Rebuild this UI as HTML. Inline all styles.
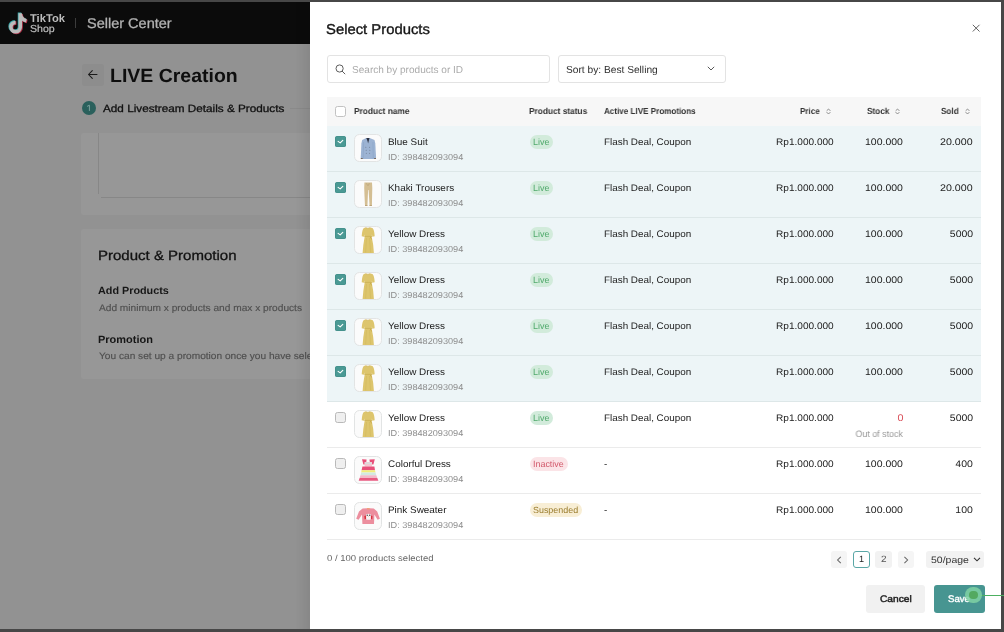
<!DOCTYPE html>
<html><head><meta charset="utf-8">
<style>
*{box-sizing:border-box;margin:0;padding:0}
html,body{width:1004px;height:632px;overflow:hidden;background:#929292;font-family:"Liberation Sans",sans-serif;position:relative}
.abs{position:absolute}
.t{position:absolute;white-space:nowrap;transform-origin:0 0;text-rendering:geometricPrecision;will-change:transform}
.cbon{width:11.1px;height:11.1px;border-radius:2.5px;background:#4a9994;box-shadow:inset 0 0 0 .6px #3f8b86}

.cboff{width:11px;height:11.1px;border-radius:2.5px;border:1px solid #b9b9b9;background:#efefef}
.thumb{width:28px;height:28.3px;border:1px solid #e2e4e4;border-radius:5.5px;background:#fbfbfb;overflow:hidden}
</style></head><body>
<!-- header -->
<div class="abs" style="left:0;top:0;width:1004px;height:44px;background:#0b0b0b"></div>
<svg class="abs" style="left:0.4px;top:0.6px" width="32" height="40" viewBox="0 0 32 40">
  <g fill="none" stroke-width="3.5">
  <path d="M20.3 12.2 V26.1 A4.7 4.7 0 1 1 15.6 21.4 M20.3 13 Q21.3 18.6 26.4 19.8" stroke="#3aa9ab" transform="translate(-0.8,-0.7)"/>
  <path d="M20.3 12.2 V26.1 A4.7 4.7 0 1 1 15.6 21.4 M20.3 13 Q21.3 18.6 26.4 19.8" stroke="#b02c44" transform="translate(0.8,0.7)"/>
  <path d="M20.3 12.2 V26.1 A4.7 4.7 0 1 1 15.6 21.4 M20.3 13 Q21.3 18.6 26.4 19.8" stroke="#bcbcbc"/>
  </g>
</svg>
<div class="t" style="left:29.90px;top:13.90px;font-size:11.17px;line-height:11.17px;font-weight:bold;color:#bdbdbd;transform:scaleX(0.987);">TikTok</div>
<div class="t" style="left:29.64px;top:24.70px;font-size:10.20px;line-height:10.20px;font-weight:normal;color:#bdbdbd;-webkit-text-stroke:0.2px #bdbdbd;transform:scaleX(1.041);">Shop</div>
<div class="abs" style="left:75.2px;top:18px;width:1px;height:10px;background:#3c3c3c"></div>
<div class="t" style="left:87.29px;top:15.80px;font-size:14.11px;line-height:14.11px;font-weight:normal;color:#b2b2b2;-webkit-text-stroke:0.3px #b2b2b2;transform:scaleX(1.028);">Seller Center</div>

<!-- page under overlay -->
<div class="abs" style="left:81.5px;top:63.5px;width:22.3px;height:22px;border-radius:3px;background:#8d8d8d"></div>
<svg class="abs" style="left:87px;top:69px" width="11" height="11" viewBox="0 0 11 11"><path d="M10 5.5 H1.6 M5.3 1.6 L1.5 5.5 L5.3 9.4" fill="none" stroke="#1a1a1a" stroke-width="1.05" stroke-linecap="round" stroke-linejoin="round"/></svg>
<div class="t" style="left:109.63px;top:66.80px;font-size:19.13px;line-height:19.13px;font-weight:bold;color:#0e0e0e;transform:scaleX(1.019);">LIVE Creation</div>
<div class="abs" style="left:82px;top:101px;width:14px;height:14px;border-radius:50%;background:#2a605c"></div>
<svg class="abs" style="left:82px;top:101px" width="14" height="14" viewBox="0 0 14 14"><path d="M5.1 5.4 L7.4 4.2 V9.9" fill="none" stroke="#84a9a4" stroke-width=".9" stroke-linejoin="round"/></svg>
<div class="t" style="left:102.90px;top:104.95px;font-size:10.47px;line-height:10.47px;font-weight:normal;color:#111;-webkit-text-stroke:0.3px #111;transform:scaleX(1.121);">Add Livestream Details &amp; Products</div>
<div class="abs" style="left:290px;top:107.7px;width:22px;height:1px;background:#8a8a8a"></div>
<div class="abs" style="left:81.3px;top:133px;width:240px;height:81.7px;border-radius:2px;background:#979797"></div>
<div class="abs" style="left:98px;top:133px;width:1px;height:61px;background:#878787"></div>
<div class="abs" style="left:100.5px;top:196.8px;width:220px;height:1px;background:#878787"></div>
<div class="abs" style="left:81px;top:228.6px;width:240px;height:150px;border-radius:2px;background:#979797"></div>
<div class="t" style="left:97.59px;top:249.20px;font-size:13.55px;line-height:13.55px;font-weight:normal;color:#121212;-webkit-text-stroke:0.3px #121212;transform:scaleX(1.108);">Product &amp; Promotion</div>
<div class="t" style="left:98.44px;top:286.80px;font-size:10.47px;line-height:10.47px;font-weight:bold;color:#161616;transform:scaleX(1.032);">Add Products</div>
<div class="t" style="left:98.70px;top:303.50px;font-size:9.50px;line-height:9.50px;font-weight:normal;color:#4f4f4f;-webkit-text-stroke:0.15px #4f4f4f;transform:scaleX(1.068);">Add minimum x products and max x products</div>
<div class="t" style="left:98.02px;top:335.05px;font-size:10.61px;line-height:10.61px;font-weight:bold;color:#161616;transform:scaleX(1.034);">Promotion</div>
<div class="t" style="left:98.53px;top:352.10px;font-size:9.50px;line-height:9.50px;font-weight:normal;color:#4f4f4f;-webkit-text-stroke:0.15px #4f4f4f;transform:scaleX(1.068);">You can set up a promotion once you have selected products</div>

<!-- modal -->
<div class="abs" style="left:296px;top:0;width:14px;height:632px;background:linear-gradient(to right,rgba(0,0,0,0),rgba(0,0,0,.07))"></div>
<div class="abs" style="left:310px;top:0;width:694px;height:632px;background:#fff"></div>
<div class="t" style="left:326.48px;top:22.70px;font-size:14.25px;line-height:14.25px;font-weight:normal;color:#161616;-webkit-text-stroke:0.35px #161616;transform:scaleX(1.041);">Select Products</div>
<svg class="abs" style="left:972.2px;top:23.9px" width="8.5" height="8.5" viewBox="0 0 8.5 8.5"><path d="M.8 .8 L7.5 7.5 M7.5 .8 L.8 7.5" stroke="#5a5a5a" stroke-width=".95"/></svg>
<div class="abs" style="left:327.2px;top:55.2px;width:222.6px;height:27.5px;border:1px solid #e3e3e3;border-radius:3px"></div>
<svg class="abs" style="left:335.4px;top:63.6px" width="11" height="11" viewBox="0 0 11 11"><circle cx="4.6" cy="4.5" r="3.6" fill="none" stroke="#555" stroke-width=".95"/><path d="M7.2 7.2 L9.9 9.9" stroke="#555" stroke-width=".95" stroke-linecap="round"/></svg>
<div class="t" style="left:351.60px;top:65.95px;font-size:10.06px;line-height:10.06px;font-weight:normal;color:#ababab;transform:scaleX(0.997);">Search by products or ID</div>
<div class="abs" style="left:558px;top:55.3px;width:167.8px;height:27.5px;border:1px solid #e3e3e3;border-radius:3px"></div>
<div class="t" style="left:566.30px;top:65.50px;font-size:10.20px;line-height:10.20px;font-weight:normal;color:#2e2e2e;transform:scaleX(0.998);">Sort by: Best Selling</div>
<svg class="abs" style="left:707.2px;top:66.2px" width="8" height="5" viewBox="0 0 8 5"><path d="M.8 .8 L4 4 L7.2 .8" fill="none" stroke="#505050" stroke-width=".95"/></svg>

<div class="abs" style="left:326.5px;top:96.5px;width:654.8px;height:29.5px;background:#f7f7f7"></div>
<div class="abs cboff" style="left:335.1px;top:106px;width:10.9px;height:10.8px;background:#fff;border-color:#c2c2c2"></div>
<div class="t" style="left:354.23px;top:107.10px;font-size:8.80px;line-height:8.80px;font-weight:bold;color:#333;transform:scaleX(0.945);">Product name</div>
<div class="t" style="left:529.13px;top:107.10px;font-size:8.80px;line-height:8.80px;font-weight:bold;color:#333;transform:scaleX(0.944);">Product status</div>
<div class="t" style="left:604.47px;top:107.10px;font-size:8.80px;line-height:8.80px;font-weight:bold;color:#333;transform:scaleX(0.919);">Active LIVE Promotions</div>
<div class="t" style="left:799.54px;top:107.10px;font-size:8.80px;line-height:8.80px;font-weight:bold;color:#333;transform:scaleX(0.916);">Price</div>
<div class="t" style="left:866.67px;top:107.10px;font-size:8.80px;line-height:8.80px;font-weight:bold;color:#333;transform:scaleX(0.936);">Stock</div>
<div class="t" style="left:941.27px;top:107.10px;font-size:8.80px;line-height:8.80px;font-weight:bold;color:#333;transform:scaleX(0.926);">Sold</div>
<svg class="abs" style="left:825.5px;top:108.2px" width="5" height="7" viewBox="0 0 5 7"><path d="M.9 2.6 L2.5 1 L4.1 2.6 M.9 4.4 L2.5 6 L4.1 4.4" fill="none" stroke="#7a7a7a" stroke-width=".85" stroke-linecap="round" stroke-linejoin="round"/></svg>
<svg class="abs" style="left:895.1px;top:108.2px" width="5" height="7" viewBox="0 0 5 7"><path d="M.9 2.6 L2.5 1 L4.1 2.6 M.9 4.4 L2.5 6 L4.1 4.4" fill="none" stroke="#7a7a7a" stroke-width=".85" stroke-linecap="round" stroke-linejoin="round"/></svg>
<svg class="abs" style="left:964.9px;top:108.2px" width="5" height="7" viewBox="0 0 5 7"><path d="M.9 2.6 L2.5 1 L4.1 2.6 M.9 4.4 L2.5 6 L4.1 4.4" fill="none" stroke="#7a7a7a" stroke-width=".85" stroke-linecap="round" stroke-linejoin="round"/></svg>

<div class="abs" style="left:326.5px;top:126px;width:654.7px;height:46px;background:#edf5f7"></div>
<div class="abs" style="left:326.5px;top:171px;width:654.7px;height:1px;background:#dde7e8"></div>
<div class="abs cbon" style="left:335px;top:136px"><svg width="11.1" height="11.1" viewBox="0 0 11.1 11.1" style="position:absolute;left:0;top:0"><path d="M3.1 5.4 L5.2 6.9 L7.8 4.3" fill="none" stroke="#fff" stroke-width="1.1" stroke-linecap="round" stroke-linejoin="round"/></svg></div>
<div class="abs thumb" style="left:354.3px;top:134px"><svg width="28" height="28" viewBox="0 0 28 28" style="position:absolute;left:-1px;top:-1px"><path d="M12.2 4.1 L15.7 4.1 L20.5 6 L21.3 9.5 L22.1 24.6 L20 24.9 L19.6 24.9 L8.8 24.9 L6.7 24.6 L7.4 9.5 L8.2 6 Z" fill="#9cb3d3"/><path d="M9.6 8 L9.2 24.6 M18.9 8 L19.3 24.6" stroke="#87a0c4" stroke-width=".5"/><path d="M12.3 4.1 L15.5 4.1 L14.7 7 L14.1 9.6 L13.5 7 Z" fill="#2c3140"/><rect x="6.8" y="24" width="1.9" height=".9" fill="#6e5e50"/><rect x="20.1" y="24" width="1.9" height=".9" fill="#6e5e50"/><g fill="#6f7c92"><circle cx="11.8" cy="13.2" r=".5"/><circle cx="15.6" cy="13.2" r=".5"/><circle cx="12.2" cy="16.3" r=".5"/><circle cx="15.8" cy="16.3" r=".5"/><circle cx="12.3" cy="19.3" r=".5"/><circle cx="15.6" cy="19.3" r=".5"/></g></svg></div>
<div class="t" style="left:387.72px;top:138.00px;font-size:9.50px;line-height:9.50px;font-weight:normal;color:#1c1c1c;transform:scaleX(1.044);">Blue Suit</div>
<div class="t" style="left:387.71px;top:153.20px;font-size:8.66px;line-height:8.66px;font-weight:normal;color:#8c8c8c;transform:scaleX(1.056);">ID: 398482093094</div>
<div class="abs" style="left:529.9px;top:134.5px;width:23.3px;height:14.3px;border-radius:7.2px;background:#d2ebdb"></div>
<div class="t" style="left:533.16px;top:138.00px;font-size:8.94px;line-height:8.94px;font-weight:normal;color:#4fa96b;transform:scaleX(0.990);">Live</div>
<div class="t" style="left:603.72px;top:138.20px;font-size:9.50px;line-height:9.50px;font-weight:normal;color:#222;transform:scaleX(1.038);">Flash Deal, Coupon</div>
<div class="t" style="left:775.80px;top:137.85px;font-size:9.50px;line-height:9.50px;font-weight:normal;color:#222;transform:scaleX(1.061);">Rp1.000.000</div>
<div class="t" style="left:865.17px;top:137.85px;font-size:9.50px;line-height:9.50px;font-weight:normal;color:#222;transform:scaleX(1.104);">100.000</div>
<div class="t" style="left:940.04px;top:137.85px;font-size:9.50px;line-height:9.50px;font-weight:normal;color:#222;transform:scaleX(1.122);">20.000</div>
<div class="abs" style="left:326.5px;top:172px;width:654.7px;height:46px;background:#edf5f7"></div>
<div class="abs" style="left:326.5px;top:217px;width:654.7px;height:1px;background:#dde7e8"></div>
<div class="abs cbon" style="left:335px;top:182px"><svg width="11.1" height="11.1" viewBox="0 0 11.1 11.1" style="position:absolute;left:0;top:0"><path d="M3.1 5.4 L5.2 6.9 L7.8 4.3" fill="none" stroke="#fff" stroke-width="1.1" stroke-linecap="round" stroke-linejoin="round"/></svg></div>
<div class="abs thumb" style="left:354.3px;top:180px"><svg width="28" height="28" viewBox="0 0 28 28" style="position:absolute;left:-1px;top:-1px"><path d="M10.4 2.6 L18 2.6 L18.3 8 L18.1 16 L17.9 25.9 L15.6 25.9 L14.6 10 L14.1 10 L13.4 25.9 L11 25.9 L10.5 16 L10.2 8 Z" fill="#d4be93"/><path d="M12.5 3.2 L13.6 5.6 M15.3 3.2 L14.4 5.6" stroke="#b39d72" stroke-width=".6"/><rect x="11" y="25" width="2.4" height=".9" fill="#b8a076"/><rect x="15.5" y="25" width="2.4" height=".9" fill="#b8a076"/></svg></div>
<div class="t" style="left:387.72px;top:184.00px;font-size:9.50px;line-height:9.50px;font-weight:normal;color:#1c1c1c;transform:scaleX(1.044);">Khaki Trousers</div>
<div class="t" style="left:387.71px;top:199.20px;font-size:8.66px;line-height:8.66px;font-weight:normal;color:#8c8c8c;transform:scaleX(1.056);">ID: 398482093094</div>
<div class="abs" style="left:529.9px;top:180.5px;width:23.3px;height:14.3px;border-radius:7.2px;background:#d2ebdb"></div>
<div class="t" style="left:533.16px;top:184.00px;font-size:8.94px;line-height:8.94px;font-weight:normal;color:#4fa96b;transform:scaleX(0.990);">Live</div>
<div class="t" style="left:603.72px;top:184.20px;font-size:9.50px;line-height:9.50px;font-weight:normal;color:#222;transform:scaleX(1.038);">Flash Deal, Coupon</div>
<div class="t" style="left:775.80px;top:183.85px;font-size:9.50px;line-height:9.50px;font-weight:normal;color:#222;transform:scaleX(1.061);">Rp1.000.000</div>
<div class="t" style="left:865.17px;top:183.85px;font-size:9.50px;line-height:9.50px;font-weight:normal;color:#222;transform:scaleX(1.104);">100.000</div>
<div class="t" style="left:940.04px;top:183.85px;font-size:9.50px;line-height:9.50px;font-weight:normal;color:#222;transform:scaleX(1.122);">20.000</div>
<div class="abs" style="left:326.5px;top:218px;width:654.7px;height:46px;background:#edf5f7"></div>
<div class="abs" style="left:326.5px;top:263px;width:654.7px;height:1px;background:#dde7e8"></div>
<div class="abs cbon" style="left:335px;top:228px"><svg width="11.1" height="11.1" viewBox="0 0 11.1 11.1" style="position:absolute;left:0;top:0"><path d="M3.1 5.4 L5.2 6.9 L7.8 4.3" fill="none" stroke="#fff" stroke-width="1.1" stroke-linecap="round" stroke-linejoin="round"/></svg></div>
<div class="abs thumb" style="left:354.3px;top:226px"><svg width="28" height="28" viewBox="0 0 28 28" style="position:absolute;left:-1px;top:-1px"><path d="M11.6 1.5 Q13.9 3 16.2 1.5 L18.4 2.1 Q20.3 3.5 20.7 10.3 L18.4 10.8 L17.9 8.5 L17.8 11 Q19.4 18 19.9 27 L8.6 27 Q9.2 18 10.6 11 L10.5 8.5 L10 10.8 L7.7 10.3 Q8.1 3.5 9.9 2.1 Z" fill="#ddc56d"/><path d="M12.5 12 L11.6 26.5 M15.5 12 L16.6 26.5" stroke="#cdb257" stroke-width=".4"/><path d="M10.3 10.4 H18.2" stroke="#c9ad52" stroke-width=".7"/><path d="M16.6 10.6 L17.9 13.4 L17.2 13.6 L16.3 11.2 Z" fill="#c4a64a"/><path d="M11.6 1.5 Q13.9 3 16.2 1.5" fill="none" stroke="#c9ad52" stroke-width=".5"/></svg></div>
<div class="t" style="left:387.72px;top:230.00px;font-size:9.50px;line-height:9.50px;font-weight:normal;color:#1c1c1c;transform:scaleX(1.044);">Yellow Dress</div>
<div class="t" style="left:387.71px;top:245.20px;font-size:8.66px;line-height:8.66px;font-weight:normal;color:#8c8c8c;transform:scaleX(1.056);">ID: 398482093094</div>
<div class="abs" style="left:529.9px;top:226.5px;width:23.3px;height:14.3px;border-radius:7.2px;background:#d2ebdb"></div>
<div class="t" style="left:533.16px;top:230.00px;font-size:8.94px;line-height:8.94px;font-weight:normal;color:#4fa96b;transform:scaleX(0.990);">Live</div>
<div class="t" style="left:603.72px;top:230.20px;font-size:9.50px;line-height:9.50px;font-weight:normal;color:#222;transform:scaleX(1.038);">Flash Deal, Coupon</div>
<div class="t" style="left:775.80px;top:229.85px;font-size:9.50px;line-height:9.50px;font-weight:normal;color:#222;transform:scaleX(1.061);">Rp1.000.000</div>
<div class="t" style="left:865.17px;top:229.85px;font-size:9.50px;line-height:9.50px;font-weight:normal;color:#222;transform:scaleX(1.104);">100.000</div>
<div class="t" style="right:31.10px;transform-origin:100% 0;top:229.85px;font-size:9.50px;line-height:9.50px;font-weight:normal;color:#222;transform:scaleX(1.104);">5000 </div>
<div class="abs" style="left:326.5px;top:264px;width:654.7px;height:46px;background:#edf5f7"></div>
<div class="abs" style="left:326.5px;top:309px;width:654.7px;height:1px;background:#dde7e8"></div>
<div class="abs cbon" style="left:335px;top:274px"><svg width="11.1" height="11.1" viewBox="0 0 11.1 11.1" style="position:absolute;left:0;top:0"><path d="M3.1 5.4 L5.2 6.9 L7.8 4.3" fill="none" stroke="#fff" stroke-width="1.1" stroke-linecap="round" stroke-linejoin="round"/></svg></div>
<div class="abs thumb" style="left:354.3px;top:272px"><svg width="28" height="28" viewBox="0 0 28 28" style="position:absolute;left:-1px;top:-1px"><path d="M11.6 1.5 Q13.9 3 16.2 1.5 L18.4 2.1 Q20.3 3.5 20.7 10.3 L18.4 10.8 L17.9 8.5 L17.8 11 Q19.4 18 19.9 27 L8.6 27 Q9.2 18 10.6 11 L10.5 8.5 L10 10.8 L7.7 10.3 Q8.1 3.5 9.9 2.1 Z" fill="#ddc56d"/><path d="M12.5 12 L11.6 26.5 M15.5 12 L16.6 26.5" stroke="#cdb257" stroke-width=".4"/><path d="M10.3 10.4 H18.2" stroke="#c9ad52" stroke-width=".7"/><path d="M16.6 10.6 L17.9 13.4 L17.2 13.6 L16.3 11.2 Z" fill="#c4a64a"/><path d="M11.6 1.5 Q13.9 3 16.2 1.5" fill="none" stroke="#c9ad52" stroke-width=".5"/></svg></div>
<div class="t" style="left:387.72px;top:276.00px;font-size:9.50px;line-height:9.50px;font-weight:normal;color:#1c1c1c;transform:scaleX(1.044);">Yellow Dress</div>
<div class="t" style="left:387.71px;top:291.20px;font-size:8.66px;line-height:8.66px;font-weight:normal;color:#8c8c8c;transform:scaleX(1.056);">ID: 398482093094</div>
<div class="abs" style="left:529.9px;top:272.5px;width:23.3px;height:14.3px;border-radius:7.2px;background:#d2ebdb"></div>
<div class="t" style="left:533.16px;top:276.00px;font-size:8.94px;line-height:8.94px;font-weight:normal;color:#4fa96b;transform:scaleX(0.990);">Live</div>
<div class="t" style="left:603.72px;top:276.20px;font-size:9.50px;line-height:9.50px;font-weight:normal;color:#222;transform:scaleX(1.038);">Flash Deal, Coupon</div>
<div class="t" style="left:775.80px;top:275.85px;font-size:9.50px;line-height:9.50px;font-weight:normal;color:#222;transform:scaleX(1.061);">Rp1.000.000</div>
<div class="t" style="left:865.17px;top:275.85px;font-size:9.50px;line-height:9.50px;font-weight:normal;color:#222;transform:scaleX(1.104);">100.000</div>
<div class="t" style="right:31.10px;transform-origin:100% 0;top:275.85px;font-size:9.50px;line-height:9.50px;font-weight:normal;color:#222;transform:scaleX(1.104);">5000 </div>
<div class="abs" style="left:326.5px;top:310px;width:654.7px;height:46px;background:#edf5f7"></div>
<div class="abs" style="left:326.5px;top:355px;width:654.7px;height:1px;background:#dde7e8"></div>
<div class="abs cbon" style="left:335px;top:320px"><svg width="11.1" height="11.1" viewBox="0 0 11.1 11.1" style="position:absolute;left:0;top:0"><path d="M3.1 5.4 L5.2 6.9 L7.8 4.3" fill="none" stroke="#fff" stroke-width="1.1" stroke-linecap="round" stroke-linejoin="round"/></svg></div>
<div class="abs thumb" style="left:354.3px;top:318px"><svg width="28" height="28" viewBox="0 0 28 28" style="position:absolute;left:-1px;top:-1px"><path d="M11.6 1.5 Q13.9 3 16.2 1.5 L18.4 2.1 Q20.3 3.5 20.7 10.3 L18.4 10.8 L17.9 8.5 L17.8 11 Q19.4 18 19.9 27 L8.6 27 Q9.2 18 10.6 11 L10.5 8.5 L10 10.8 L7.7 10.3 Q8.1 3.5 9.9 2.1 Z" fill="#ddc56d"/><path d="M12.5 12 L11.6 26.5 M15.5 12 L16.6 26.5" stroke="#cdb257" stroke-width=".4"/><path d="M10.3 10.4 H18.2" stroke="#c9ad52" stroke-width=".7"/><path d="M16.6 10.6 L17.9 13.4 L17.2 13.6 L16.3 11.2 Z" fill="#c4a64a"/><path d="M11.6 1.5 Q13.9 3 16.2 1.5" fill="none" stroke="#c9ad52" stroke-width=".5"/></svg></div>
<div class="t" style="left:387.72px;top:322.00px;font-size:9.50px;line-height:9.50px;font-weight:normal;color:#1c1c1c;transform:scaleX(1.044);">Yellow Dress</div>
<div class="t" style="left:387.71px;top:337.20px;font-size:8.66px;line-height:8.66px;font-weight:normal;color:#8c8c8c;transform:scaleX(1.056);">ID: 398482093094</div>
<div class="abs" style="left:529.9px;top:318.5px;width:23.3px;height:14.3px;border-radius:7.2px;background:#d2ebdb"></div>
<div class="t" style="left:533.16px;top:322.00px;font-size:8.94px;line-height:8.94px;font-weight:normal;color:#4fa96b;transform:scaleX(0.990);">Live</div>
<div class="t" style="left:603.72px;top:322.20px;font-size:9.50px;line-height:9.50px;font-weight:normal;color:#222;transform:scaleX(1.038);">Flash Deal, Coupon</div>
<div class="t" style="left:775.80px;top:321.85px;font-size:9.50px;line-height:9.50px;font-weight:normal;color:#222;transform:scaleX(1.061);">Rp1.000.000</div>
<div class="t" style="left:865.17px;top:321.85px;font-size:9.50px;line-height:9.50px;font-weight:normal;color:#222;transform:scaleX(1.104);">100.000</div>
<div class="t" style="right:31.10px;transform-origin:100% 0;top:321.85px;font-size:9.50px;line-height:9.50px;font-weight:normal;color:#222;transform:scaleX(1.104);">5000 </div>
<div class="abs" style="left:326.5px;top:356px;width:654.7px;height:46px;background:#edf5f7"></div>
<div class="abs" style="left:326.5px;top:401px;width:654.7px;height:1px;background:#dde7e8"></div>
<div class="abs cbon" style="left:335px;top:366px"><svg width="11.1" height="11.1" viewBox="0 0 11.1 11.1" style="position:absolute;left:0;top:0"><path d="M3.1 5.4 L5.2 6.9 L7.8 4.3" fill="none" stroke="#fff" stroke-width="1.1" stroke-linecap="round" stroke-linejoin="round"/></svg></div>
<div class="abs thumb" style="left:354.3px;top:364px"><svg width="28" height="28" viewBox="0 0 28 28" style="position:absolute;left:-1px;top:-1px"><path d="M11.6 1.5 Q13.9 3 16.2 1.5 L18.4 2.1 Q20.3 3.5 20.7 10.3 L18.4 10.8 L17.9 8.5 L17.8 11 Q19.4 18 19.9 27 L8.6 27 Q9.2 18 10.6 11 L10.5 8.5 L10 10.8 L7.7 10.3 Q8.1 3.5 9.9 2.1 Z" fill="#ddc56d"/><path d="M12.5 12 L11.6 26.5 M15.5 12 L16.6 26.5" stroke="#cdb257" stroke-width=".4"/><path d="M10.3 10.4 H18.2" stroke="#c9ad52" stroke-width=".7"/><path d="M16.6 10.6 L17.9 13.4 L17.2 13.6 L16.3 11.2 Z" fill="#c4a64a"/><path d="M11.6 1.5 Q13.9 3 16.2 1.5" fill="none" stroke="#c9ad52" stroke-width=".5"/></svg></div>
<div class="t" style="left:387.72px;top:368.00px;font-size:9.50px;line-height:9.50px;font-weight:normal;color:#1c1c1c;transform:scaleX(1.044);">Yellow Dress</div>
<div class="t" style="left:387.71px;top:383.20px;font-size:8.66px;line-height:8.66px;font-weight:normal;color:#8c8c8c;transform:scaleX(1.056);">ID: 398482093094</div>
<div class="abs" style="left:529.9px;top:364.5px;width:23.3px;height:14.3px;border-radius:7.2px;background:#d2ebdb"></div>
<div class="t" style="left:533.16px;top:368.00px;font-size:8.94px;line-height:8.94px;font-weight:normal;color:#4fa96b;transform:scaleX(0.990);">Live</div>
<div class="t" style="left:603.72px;top:368.20px;font-size:9.50px;line-height:9.50px;font-weight:normal;color:#222;transform:scaleX(1.038);">Flash Deal, Coupon</div>
<div class="t" style="left:775.80px;top:367.85px;font-size:9.50px;line-height:9.50px;font-weight:normal;color:#222;transform:scaleX(1.061);">Rp1.000.000</div>
<div class="t" style="left:865.17px;top:367.85px;font-size:9.50px;line-height:9.50px;font-weight:normal;color:#222;transform:scaleX(1.104);">100.000</div>
<div class="t" style="right:31.10px;transform-origin:100% 0;top:367.85px;font-size:9.50px;line-height:9.50px;font-weight:normal;color:#222;transform:scaleX(1.104);">5000 </div>
<div class="abs" style="left:326.5px;top:402px;width:654.7px;height:46px;background:#ffffff"></div>
<div class="abs" style="left:326.5px;top:447px;width:654.7px;height:1px;background:#ebebeb"></div>
<div class="abs cboff" style="left:335px;top:412px"></div>
<div class="abs thumb" style="left:354.3px;top:410px"><svg width="28" height="28" viewBox="0 0 28 28" style="position:absolute;left:-1px;top:-1px"><path d="M11.6 1.5 Q13.9 3 16.2 1.5 L18.4 2.1 Q20.3 3.5 20.7 10.3 L18.4 10.8 L17.9 8.5 L17.8 11 Q19.4 18 19.9 27 L8.6 27 Q9.2 18 10.6 11 L10.5 8.5 L10 10.8 L7.7 10.3 Q8.1 3.5 9.9 2.1 Z" fill="#ddc56d"/><path d="M12.5 12 L11.6 26.5 M15.5 12 L16.6 26.5" stroke="#cdb257" stroke-width=".4"/><path d="M10.3 10.4 H18.2" stroke="#c9ad52" stroke-width=".7"/><path d="M16.6 10.6 L17.9 13.4 L17.2 13.6 L16.3 11.2 Z" fill="#c4a64a"/><path d="M11.6 1.5 Q13.9 3 16.2 1.5" fill="none" stroke="#c9ad52" stroke-width=".5"/></svg></div>
<div class="t" style="left:387.72px;top:414.00px;font-size:9.50px;line-height:9.50px;font-weight:normal;color:#1c1c1c;transform:scaleX(1.044);">Yellow Dress</div>
<div class="t" style="left:387.71px;top:429.20px;font-size:8.66px;line-height:8.66px;font-weight:normal;color:#8c8c8c;transform:scaleX(1.056);">ID: 398482093094</div>
<div class="abs" style="left:529.9px;top:410.5px;width:23.3px;height:14.3px;border-radius:7.2px;background:#d2ebdb"></div>
<div class="t" style="left:533.16px;top:414.00px;font-size:8.94px;line-height:8.94px;font-weight:normal;color:#4fa96b;transform:scaleX(0.990);">Live</div>
<div class="t" style="left:603.72px;top:414.20px;font-size:9.50px;line-height:9.50px;font-weight:normal;color:#222;transform:scaleX(1.038);">Flash Deal, Coupon</div>
<div class="t" style="left:775.80px;top:413.85px;font-size:9.50px;line-height:9.50px;font-weight:normal;color:#222;transform:scaleX(1.061);">Rp1.000.000</div>
<div class="t" style="right:100.40px;transform-origin:100% 0;top:413.75px;font-size:9.78px;line-height:9.78px;font-weight:normal;color:#d9505a;transform:scaleX(1.104);">0 </div>
<div class="t" style="right:100.70px;transform-origin:100% 0;top:429.85px;font-size:9.36px;line-height:9.36px;font-weight:normal;color:#999;transform:scaleX(0.950);">Out of stock </div>
<div class="t" style="right:31.10px;transform-origin:100% 0;top:413.85px;font-size:9.50px;line-height:9.50px;font-weight:normal;color:#222;transform:scaleX(1.104);">5000 </div>
<div class="abs" style="left:326.5px;top:448px;width:654.7px;height:46px;background:#ffffff"></div>
<div class="abs" style="left:326.5px;top:493px;width:654.7px;height:1px;background:#ebebeb"></div>
<div class="abs cboff" style="left:335px;top:458px"></div>
<div class="abs thumb" style="left:354.3px;top:456px"><svg width="28" height="28" viewBox="0 0 28 28" style="position:absolute;left:-1px;top:-1px"><path d="M8 3.2 L12.6 3.6 L12 8.2 L9.4 8.4 Z M15.4 3.6 L20.8 3.2 L19.4 8.4 L16.2 8.2 Z" fill="#e8507a"/><rect x="10.6" y="6" width="7.4" height="4.6" fill="#f4c6d2"/><rect x="10.6" y="6.6" width="7.4" height="1.1" fill="#cfe6e0"/><path d="M8.4 10.5 L20.4 10.5 L21 14.2 L7.6 14.2 Z" fill="#e8507a"/><path d="M7.6 14.2 L21 14.2 L21.5 16.6 L7.2 16.6 Z" fill="#f1ee7a"/><path d="M7.2 16.6 L21.5 16.6 L22.3 19.2 L6.5 19.2 Z" fill="#d3e9e1"/><path d="M6.5 19.2 L22.3 19.2 L23.3 22 L5.6 22 Z" fill="#f2b9c9"/><path d="M5.6 22 L23.3 22 L24.4 24.8 L4.7 24.8 Z" fill="#e85a80"/></svg></div>
<div class="t" style="left:387.72px;top:460.00px;font-size:9.50px;line-height:9.50px;font-weight:normal;color:#1c1c1c;transform:scaleX(1.044);">Colorful Dress</div>
<div class="t" style="left:387.71px;top:475.20px;font-size:8.66px;line-height:8.66px;font-weight:normal;color:#8c8c8c;transform:scaleX(1.056);">ID: 398482093094</div>
<div class="abs" style="left:529.9px;top:456.5px;width:37.9px;height:14.3px;border-radius:7.2px;background:#fbe4e7"></div>
<div class="t" style="left:533.16px;top:460.00px;font-size:8.94px;line-height:8.94px;font-weight:normal;color:#d2596b;transform:scaleX(0.990);">Inactive</div>
<div class="t" style="left:603.72px;top:460.20px;font-size:9.50px;line-height:9.50px;font-weight:normal;color:#222;transform:scaleX(1.038);">-</div>
<div class="t" style="left:775.80px;top:459.85px;font-size:9.50px;line-height:9.50px;font-weight:normal;color:#222;transform:scaleX(1.061);">Rp1.000.000</div>
<div class="t" style="left:865.17px;top:459.85px;font-size:9.50px;line-height:9.50px;font-weight:normal;color:#222;transform:scaleX(1.104);">100.000</div>
<div class="t" style="right:31.10px;transform-origin:100% 0;top:459.85px;font-size:9.50px;line-height:9.50px;font-weight:normal;color:#222;transform:scaleX(1.104);">400 </div>
<div class="abs" style="left:326.5px;top:494px;width:654.7px;height:46px;background:#ffffff"></div>
<div class="abs" style="left:326.5px;top:539px;width:654.7px;height:1px;background:#ebebeb"></div>
<div class="abs cboff" style="left:335px;top:504px"></div>
<div class="abs thumb" style="left:354.3px;top:502px"><svg width="28" height="28" viewBox="0 0 28 28" style="position:absolute;left:-1px;top:-1px"><path d="M8.6 6.6 L12.8 6.2 L15.5 6.2 L19.8 6.6 L23.2 9.5 L25.9 16.8 L23.6 17.8 L20.4 12.5 L20 21.9 L8.4 21.9 L8 12.5 L4.6 17.8 L2.2 16.8 L5 9.5 Z" fill="#ec8e9e"/><rect x="13" y="6.3" width="2.6" height="1" fill="#f2a060"/><path d="M12 12.6 Q14.5 10.8 17 12.6 L17 17.2 Q14.5 18.4 12 17.2 Z" fill="#f7f1f3"/><path d="M10.3 14 L12.1 13.6 L12.1 17 L10.6 17.2 Z M16.9 13.6 L18.5 14 L18.3 17.2 L16.9 17 Z" fill="#d8303e"/><circle cx="13.3" cy="13.3" r=".8" fill="#555"/><circle cx="15.7" cy="13.3" r=".8" fill="#555"/><path d="M14.2 14.3 L14.9 14.3 L14.55 15.2 Z" fill="#f29a4a"/></svg></div>
<div class="t" style="left:387.72px;top:506.00px;font-size:9.50px;line-height:9.50px;font-weight:normal;color:#1c1c1c;transform:scaleX(1.044);">Pink Sweater</div>
<div class="t" style="left:387.71px;top:521.20px;font-size:8.66px;line-height:8.66px;font-weight:normal;color:#8c8c8c;transform:scaleX(1.056);">ID: 398482093094</div>
<div class="abs" style="left:529.9px;top:502.5px;width:51.9px;height:14.3px;border-radius:7.2px;background:#f8eed5"></div>
<div class="t" style="left:533.16px;top:506.00px;font-size:8.94px;line-height:8.94px;font-weight:normal;color:#9a7c2c;transform:scaleX(0.990);">Suspended</div>
<div class="t" style="left:603.72px;top:506.20px;font-size:9.50px;line-height:9.50px;font-weight:normal;color:#222;transform:scaleX(1.038);">-</div>
<div class="t" style="left:775.80px;top:505.85px;font-size:9.50px;line-height:9.50px;font-weight:normal;color:#222;transform:scaleX(1.061);">Rp1.000.000</div>
<div class="t" style="left:865.17px;top:505.85px;font-size:9.50px;line-height:9.50px;font-weight:normal;color:#222;transform:scaleX(1.104);">100.000</div>
<div class="t" style="right:31.10px;transform-origin:100% 0;top:505.85px;font-size:9.50px;line-height:9.50px;font-weight:normal;color:#222;transform:scaleX(1.104);">100 </div>

<!-- footer -->
<div class="t" style="left:326.72px;top:554.45px;font-size:8.66px;line-height:8.66px;font-weight:normal;color:#666;transform:scaleX(1.102);">0 / 100 products selected</div>
<div class="abs" style="left:831px;top:551.2px;width:16.3px;height:16.5px;border-radius:3px;background:#f5f5f5"></div>
<svg class="abs" style="left:835px;top:555px" width="8" height="10" viewBox="0 0 8 10"><path d="M5.8 1.8 L2.6 5 L5.8 8.2" fill="none" stroke="#666" stroke-width="1.05"/></svg>
<div class="abs" style="left:853.1px;top:551.2px;width:16.5px;height:16.5px;border-radius:3px;border:1.2px solid #5aa7a6;background:#fff"></div>
<div class="t" style="left:858.65px;top:555.45px;font-size:9.08px;line-height:9.08px;font-weight:normal;color:#222;transform:scaleX(1.000);">1</div>
<div class="abs" style="left:875.3px;top:551.2px;width:16.3px;height:16.5px;border-radius:3px;background:#f2f2f2"></div>
<div class="t" style="left:881.05px;top:555.45px;font-size:9.08px;line-height:9.08px;font-weight:normal;color:#555;transform:scaleX(1.100);">2</div>
<div class="abs" style="left:897.7px;top:551.2px;width:16.3px;height:16.5px;border-radius:3px;background:#f5f5f5"></div>
<svg class="abs" style="left:901.5px;top:555px" width="8" height="10" viewBox="0 0 8 10"><path d="M2.4 1.8 L5.6 5 L2.4 8.2" fill="none" stroke="#666" stroke-width="1.05"/></svg>
<div class="abs" style="left:925.8px;top:551.4px;width:58.5px;height:16.3px;border-radius:3px;background:#f2f2f2"></div>
<div class="t" style="left:930.74px;top:555.95px;font-size:9.36px;line-height:9.36px;font-weight:normal;color:#333;transform:scaleX(1.121);">50/page</div>
<svg class="abs" style="left:973.1px;top:556.2px" width="8" height="6" viewBox="0 0 8 6"><path d="M1 1.8 L4 4.8 L7 1.8" fill="none" stroke="#333" stroke-width="1.15"/></svg>
<div class="abs" style="left:865.6px;top:585px;width:59.3px;height:27.7px;border-radius:3px;background:#f1f1f1"></div>
<div class="t" style="left:879.63px;top:595.35px;font-size:9.50px;line-height:9.50px;font-weight:normal;color:#222;-webkit-text-stroke:0.45px #222;transform:scaleX(1.072);">Cancel</div>
<div class="abs" style="left:933.8px;top:584.8px;width:51.1px;height:27.8px;border-radius:3px;background:#479591"></div>
<div class="t" style="left:948.15px;top:595.10px;font-size:9.64px;line-height:9.64px;font-weight:normal;color:#fff;-webkit-text-stroke:0.4px #fff;transform:scaleX(0.995);">Save</div>

<!-- frame borders -->
<div class="abs" style="left:0;top:0;width:1004px;height:2px;background:#474747"></div>
<div class="abs" style="left:1001px;top:0;width:3px;height:632px;background:#474747"></div>
<div class="abs" style="left:0;top:629px;width:1004px;height:3px;background:#474747"></div>
<!-- annotation -->
<div class="abs" style="left:976px;top:594.5px;width:28px;height:1.5px;background:#4db061"></div>
<div class="abs" style="left:965.1px;top:586.8px;width:16.6px;height:16.6px;border-radius:50%;background:rgba(128,210,163,.85)"></div>
<div class="abs" style="left:969.1px;top:590.8px;width:8.6px;height:8.6px;border-radius:50%;background:#53a960"></div>
</body></html>
